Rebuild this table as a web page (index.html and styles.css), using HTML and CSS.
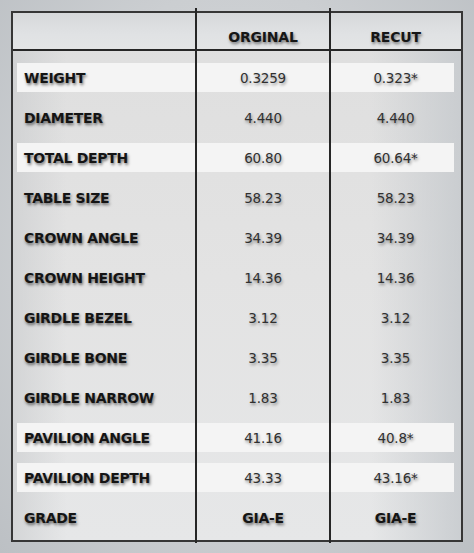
FILE: index.html
```html
<!DOCTYPE html>
<html>
<head>
<meta charset="utf-8">
<link rel="stylesheet" href="styles.css">
</head>
<body>
<div class="page">
  <div class="sheet">
    <div class="head">
      <div class="hcell"></div>
      <div class="hcell">ORGINAL</div>
      <div class="hcell">RECUT</div>
    </div>
    <div class="rows">
      <div class="row band"><div class="label">WEIGHT</div><div class="val">0.3259</div><div class="val">0.323*</div></div>
      <div class="row"><div class="label">DIAMETER</div><div class="val">4.440</div><div class="val">4.440</div></div>
      <div class="row band"><div class="label">TOTAL DEPTH</div><div class="val">60.80</div><div class="val">60.64*</div></div>
      <div class="row"><div class="label">TABLE SIZE</div><div class="val">58.23</div><div class="val">58.23</div></div>
      <div class="row"><div class="label">CROWN ANGLE</div><div class="val">34.39</div><div class="val">34.39</div></div>
      <div class="row"><div class="label">CROWN HEIGHT</div><div class="val">14.36</div><div class="val">14.36</div></div>
      <div class="row"><div class="label">GIRDLE BEZEL</div><div class="val">3.12</div><div class="val">3.12</div></div>
      <div class="row"><div class="label">GIRDLE BONE</div><div class="val">3.35</div><div class="val">3.35</div></div>
      <div class="row"><div class="label">GIRDLE NARROW</div><div class="val">1.83</div><div class="val">1.83</div></div>
      <div class="row band"><div class="label">PAVILION ANGLE</div><div class="val">41.16</div><div class="val">40.8*</div></div>
      <div class="row band"><div class="label">PAVILION DEPTH</div><div class="val">43.33</div><div class="val">43.16*</div></div>
      <div class="row"><div class="label">GRADE</div><div class="val bold">GIA-E</div><div class="val bold">GIA-E</div></div>
    </div>
  </div>
  <div class="divider d1"></div>
  <div class="divider d2"></div>
</div>
</body>
</html>
```

FILE: styles.css
```css
html, body {
  margin: 0;
  padding: 0;
}
body {
  width: 474px;
  height: 553px;
  overflow: hidden;
  background: radial-gradient(ellipse at 50% 45%, #d8dadc 0%, #cbced1 60%, #bcc0c4 100%);
  font-family: "DejaVu Sans", Verdana, sans-serif;
}
.page {
  position: relative;
  width: 474px;
  height: 553px;
  padding: 11px 0 0 11px;
  box-sizing: border-box;
}
.sheet {
  width: 452px;
  height: 531px;
  box-sizing: border-box;
  border: 2px solid #363636;
  background:
    linear-gradient(90deg, rgba(200,202,204,0.6) 0%, rgba(225,225,225,0) 12%, rgba(229,229,229,0) 80%, rgba(196,200,204,0.8) 100%),
    linear-gradient(180deg, #dedede 0%, #e3e3e3 50%, #e6e7e8 100%);
}
.head {
  display: grid;
  grid-template-columns: 183px 134px 1fr;
  height: 36px;
  border-bottom: 2px solid #262626;
  background: linear-gradient(180deg, #d6d8da 0%, #e0e2e4 60%, #e3e4e5 100%);
}
.hcell {
  display: flex;
  align-items: center;
  justify-content: center;
  padding-top: 11px;
  font-weight: bold;
  font-size: 14px;
  letter-spacing: -0.2px;
  color: #161616;
  text-shadow: 1px 2px 3px rgba(0, 0, 0, 0.5);
}
.rows {
  padding-top: 6px;
}
.row {
  display: grid;
  grid-template-columns: 183px 134px 1fr;
  height: 40px;
  align-items: center;
}
.row.band {
  background: linear-gradient(#f4f4f4, #f4f4f4) 4px 6px / 437px 29px no-repeat;
}
.label {
  padding-left: 11px;
  padding-top: 1px;
  font-weight: bold;
  font-size: 14px;
  letter-spacing: -0.3px;
  color: #141414;
  text-shadow: 1px 2px 3px rgba(0, 0, 0, 0.55);
}
.val {
  text-align: center;
  padding-top: 1px;
  font-size: 13.5px;
  letter-spacing: -0.2px;
  color: #303030;
  text-shadow: 1px 2px 3px rgba(0, 0, 0, 0.4);
}
.val.bold {
  font-weight: bold;
  font-size: 14px;
  letter-spacing: -0.3px;
  color: #141414;
  text-shadow: 1px 2px 3px rgba(0, 0, 0, 0.55);
}
.divider {
  position: absolute;
  top: 8px;
  width: 2px;
  height: 535px;
  background: #262626;
}
.d1 {
  left: 195px;
}
.d2 {
  left: 329px;
}
```
